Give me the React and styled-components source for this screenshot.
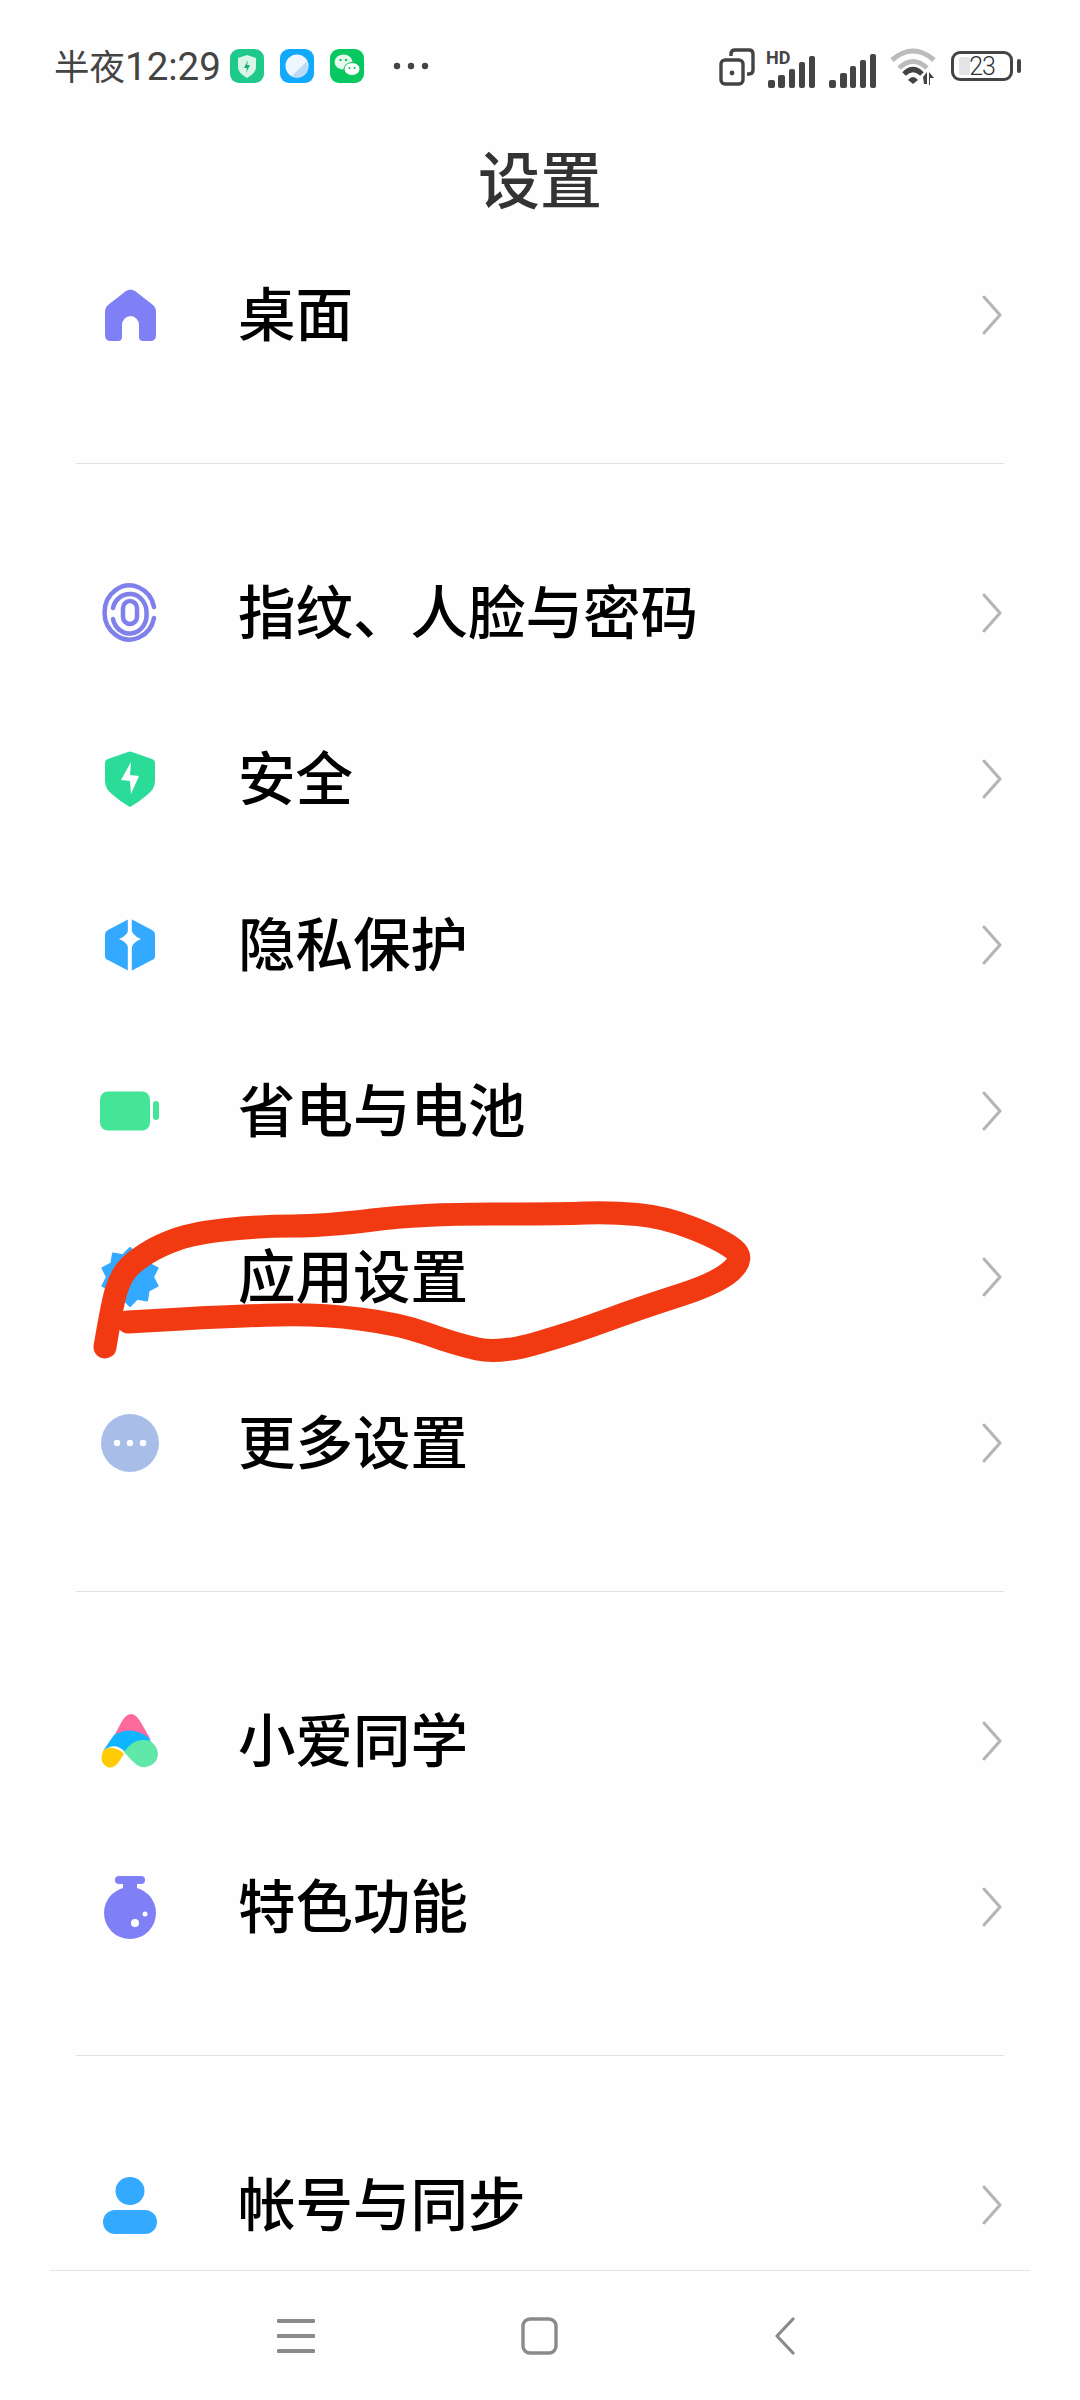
import React from 'react'
import styled, { createGlobalStyle } from 'styled-components'

const GlobalStyle = createGlobalStyle`
  html, body {
    margin: 0;
    padding: 0;
    background: #fefefe;
  }
`

const Page = styled.div`
  position: relative;
  width: 1080px;
  height: 2400px;
  display: flex;
  flex-direction: column;
  overflow: hidden;
  background: #fefefe;
  font-family: "Noto Sans CJK SC", "Noto Sans", sans-serif;
`

const StatusBar = styled.div`
  height: 62px;
  padding: 48px 60px 0 54px;
  display: flex;
  align-items: flex-start;
  justify-content: space-between;
  color: #444;
`

const StatusLeft = styled.div`
  display: flex;
  align-items: center;
  height: 36px;
`

const Clock = styled.span`
  font-size: 35.5px;
  line-height: 36px;
  margin-right: 9px;
  & b {
    font-family: Roboto, sans-serif;
    font-weight: 400;
    font-size: 38.5px;
  }
`

const AppBadge = styled.svg`
  width: 34px;
  height: 34px;
  margin-right: 16px;
`

const MoreDots = styled.svg`
  width: 36px;
  height: 8px;
  margin-left: 13px;
`

const StatusRight = styled.div`
  display: flex;
  align-items: flex-start;
  gap: 13px;
  height: 40px;
`

const SignalWrap = styled.div`
  position: relative;
  width: 48px;
  height: 36px;
  margin-top: 4px;
`

const HdLabel = styled.span`
  position: absolute;
  left: -2px;
  top: -2px;
  font-family: Roboto, sans-serif;
  font-size: 18px;
  line-height: 16px;
  font-weight: 700;
  color: #444;
`

const Battery = styled.div`
  position: relative;
  box-sizing: border-box;
  width: 62px;
  height: 30px;
  margin-top: 3px;
  margin-right: 7px;
  border: 3px solid #444;
  border-radius: 9px;
  display: flex;
  align-items: center;
  justify-content: center;
  font-family: Roboto, sans-serif;
  font-weight: 300;
  font-size: 25px;
  color: #333;
  &::before {
    content: '';
    position: absolute;
    left: 5px;
    top: 3px;
    bottom: 3px;
    width: 11px;
    border-radius: 2px;
    background: #e4e4e4;
  }
  &::after {
    content: '';
    position: absolute;
    right: -11px;
    top: 5px;
    width: 4px;
    height: 14px;
    border-radius: 2px;
    background: #444;
  }
  & span {
    position: relative;
    letter-spacing: -1px;
  }
`

const Title = styled.h1`
  margin: 0;
  height: 122px;
  padding-top: 15px;
  box-sizing: border-box;
  text-align: center;
  font-size: 62px;
  line-height: 104px;
  font-weight: 500;
  color: #333;
`

const Content = styled.div`
  flex: 1;
  min-height: 0;
  overflow: hidden;
`

const Group = styled.div`
  padding: ${(p) => (p.$first ? '0 0 65px' : '66px 0 65px')};
`

const Divider = styled.div`
  height: 1px;
  margin: 0 76px;
  background: #e3e3e3;
`

const Row = styled.div`
  height: 166px;
  padding: 0 78px 0 100px;
  display: flex;
  align-items: center;
`

const IconSlot = styled.div`
  width: 60px;
  height: 60px;
  margin-right: 78px;
  display: flex;
  align-items: center;
  justify-content: center;
  flex: none;
`

const RowLabel = styled.span`
  flex: 1;
  font-size: 57.5px;
  line-height: 70px;
  padding-bottom: 8px;
  font-weight: 500;
  color: #000;
`

const Chevron = styled.svg`
  width: 20px;
  height: 40px;
  flex: none;
`

const NavBar = styled.div`
  height: 130px;
  margin: 0 50px;
  border-top: 1px solid #e3e3e3;
  box-sizing: border-box;
  padding: 46px 235px 0 227px;
  display: flex;
  justify-content: space-between;
  align-items: flex-start;
`

const NavIcon = styled.svg`
  height: 38px;
  width: ${(p) => p.$w}px;
  margin-right: ${(p) => p.$shift || 0}px;
`

const Scribble = styled.svg`
  position: absolute;
  left: 0;
  top: 0;
  width: 1080px;
  height: 2400px;
  pointer-events: none;
`

const HomeIcon = () => (
  <svg width="51" height="52" viewBox="0 0 51 52">
    <path fill="#8080f6" d="M21 2 Q25.5 -1 30 2 L48 16 Q51 18.5 51 23 V46 Q51 52 45 52 H38 Q34 52 34 48 V36 A8.5 9 0 0 0 17 36 V48 Q17 52 13 52 H6 Q0 52 0 46 V23 Q0 18.5 3 16 Z" />
  </svg>
)

const FingerIcon = () => (
  <svg width="56" height="60" viewBox="0 0 56 60" fill="none" stroke="#8080ea" strokeWidth="4.5" strokeLinecap="round">
    <path d="M52 24 A25 27 0 1 0 52 35" />
    <path d="M11 25 A17 18.5 0 0 1 44.5 30 A17 18.5 0 0 1 11 36" />
    <rect x="21" y="18" width="14" height="23" rx="7" />
  </svg>
)

const ShieldIcon = () => (
  <svg width="50" height="56" viewBox="0 0 50 56">
    <path fill="#2bdc98" d="M23 1 Q25 0 27 1 L47 8 Q50 9 50 12 V30 Q50 38 42 44 Q34 51 26 55.5 Q25 56 24 55.5 Q16 51 8 44 Q0 38 0 30 V12 Q0 9 3 8 Z" />
    <path fill="#fff" d="M26 11 L25 24 L34 25 L26 43 L25 30 L16 29 Z" />
  </svg>
)

const PrivacyIcon = () => (
  <svg width="50" height="52" viewBox="0 0 50 52">
    <path fill="#33a9ff" d="M22 1 Q25 -1 28 1 L47 11 Q50 12.5 50 16 V37 Q50 40 47 41 L28 51 Q25 53 22 51 L3 41 Q0 40 0 37 V16 Q0 12.5 3 11 Z" />
    <rect x="22.8" y="0" width="4" height="52" fill="#fefefe" />
    <path fill="#fefefe" d="M25 7 Q27 17 36 20 Q27 23 25 33 Q23 23 14 20 Q23 17 25 7 Z" />
  </svg>
)

const BatteryIcon = () => (
  <svg width="60" height="40" viewBox="0 0 60 40">
    <rect x="0" y="0.5" width="50" height="39" rx="8" fill="#44e596" />
    <rect x="53" y="10" width="6" height="19" rx="3" fill="#44e596" />
  </svg>
)

// scalloped badge behind the scribble
const gearPoints = Array.from({ length: 20 }, (_, i) => {
  const r = i % 2 === 0 ? 29 : 23
  const a = (Math.PI * i) / 10 - Math.PI / 2
  return `${30 + r * Math.cos(a)},${30 + r * Math.sin(a)}`
}).join(' ')

const GearIcon = () => (
  <svg width="60" height="60" viewBox="0 0 60 60">
    <polygon points={gearPoints} fill="#33a9ff" stroke="#33a9ff" strokeWidth="2" strokeLinejoin="round" />
  </svg>
)

const MoreIcon = () => (
  <svg width="58" height="58" viewBox="0 0 58 58">
    <circle cx="29" cy="29" r="29" fill="#a9bde9" />
    <circle cx="16" cy="29" r="3.2" fill="#fff" />
    <circle cx="29" cy="29" r="3.2" fill="#fff" />
    <circle cx="42" cy="29" r="3.2" fill="#fff" />
  </svg>
)

const XiaoaiIcon = () => (
  <svg width="58" height="56" viewBox="0 0 58 56">
    <path fill="#ff6a9e" d="M21 8 Q30 -6 39 8 L50 27 Q30 12 11 27 Z" />
    <path fill="#0fb6ff" d="M13 22 Q30 12 47 24 L52 32 Q37 24 24 39 Q14 28 2 38 Z" />
    <path fill="#5fe8a8" d="M23 39 Q32 26 43 27 Q52 27 56 36 Q59 45 52 51 Q44 57 36 52 Q31 48 23 39 Z" />
    <path fill="#ffcb05" d="M2 38 Q8 32 15 36 Q20 37 23 41 L17 50 Q12 56 6 54 Q-1 50 1 42 Z" />
  </svg>
)

const FlaskIcon = () => (
  <svg width="52" height="63" viewBox="0 0 52 63">
    <rect x="11" y="0" width="30" height="8" rx="4" fill="#8080f6" />
    <rect x="19" y="6" width="14" height="10" fill="#8080f6" />
    <circle cx="26" cy="37" r="26" fill="#8080f6" />
    <circle cx="31" cy="47" r="4" fill="#fff" />
    <circle cx="41" cy="38" r="2.5" fill="#fff" />
  </svg>
)

const UserIcon = () => (
  <svg width="54" height="57" viewBox="0 0 54 57">
    <ellipse cx="27" cy="14" rx="14.5" ry="14" fill="#33a9ff" />
    <rect x="0" y="33" width="54" height="24" rx="12" fill="#33a9ff" />
  </svg>
)

const rows = {
  first: [{ label: '桌面', Icon: HomeIcon }],
  security: [
    { label: '指纹、人脸与密码', Icon: FingerIcon },
    { label: '安全', Icon: ShieldIcon },
    { label: '隐私保护', Icon: PrivacyIcon },
    { label: '省电与电池', Icon: BatteryIcon },
    { label: '应用设置', Icon: GearIcon },
    { label: '更多设置', Icon: MoreIcon },
  ],
  extras: [
    { label: '小爱同学', Icon: XiaoaiIcon },
    { label: '特色功能', Icon: FlaskIcon },
  ],
  account: [{ label: '帐号与同步', Icon: UserIcon }],
}

const scribblePoints = [
  [105, 1347], [112, 1305], [120, 1278], [133, 1262], [160, 1245], [195, 1233], [260, 1226], [325, 1226],
  [420, 1214], [560, 1214], [610, 1212], [665, 1217], [722, 1240], [745, 1258], [718, 1283],
  [640, 1308], [575, 1332], [500, 1354], [455, 1344], [400, 1324], [320, 1314], [235, 1316], [128, 1322],
]

const smoothPath = (pts) => {
  let d = `M${pts[0][0]} ${pts[0][1]}`
  for (let i = 1; i < pts.length - 1; i++) {
    const mx = (pts[i][0] + pts[i + 1][0]) / 2
    const my = (pts[i][1] + pts[i + 1][1]) / 2
    d += ` Q${pts[i][0]} ${pts[i][1]} ${mx} ${my}`
  }
  const last = pts[pts.length - 1]
  return `${d} L${last[0]} ${last[1]}`
}

const MenuRows = ({ items }) =>
  items.map(({ label, Icon }) => (
    <Row key={label}>
      <IconSlot><Icon /></IconSlot>
      <RowLabel>{label}</RowLabel>
      <Chevron viewBox="0 0 20 40" fill="none" stroke="#b4b4b4" strokeWidth="3" strokeLinecap="round" strokeLinejoin="round">
        <path d="M2 2 L18 20 L2 38" />
      </Chevron>
    </Row>
  ))

export default function App() {
  return (
    <Page>
      <GlobalStyle />
      <StatusBar>
        <StatusLeft>
          <Clock>半夜<b>12:29</b></Clock>
          <AppBadge viewBox="0 0 34 34">
            <rect width="34" height="34" rx="9" fill="#1fc98b" />
            <path fill="#d9f5ea" d="M17 6 L26 9 V18 Q26 24 17 29 Q8 24 8 18 V9 Z" />
            <path fill="#1fa878" d="M18 11 L14 19 H17 L16 24 L20 16 H17 Z" />
          </AppBadge>
          <AppBadge viewBox="0 0 34 34">
            <rect width="34" height="34" rx="9" fill="#12a9fb" />
            <circle cx="17" cy="17" r="11.5" fill="#eef6fe" />
            <path fill="#bcd9f8" d="M27 12 L28 20 Q26 28 17 28.5 L12 27 Z" />
          </AppBadge>
          <AppBadge viewBox="0 0 34 34">
            <rect width="34" height="34" rx="9" fill="#07c860" />
            <ellipse cx="13.5" cy="13" rx="9" ry="7.5" fill="#e8f9ef" />
            <ellipse cx="22" cy="20" rx="8" ry="6.5" fill="#fff" stroke="#07c860" strokeWidth="1" />
            <circle cx="10.5" cy="11" r="1.2" fill="#07c860" />
            <circle cx="16" cy="11" r="1.2" fill="#07c860" />
            <circle cx="19.5" cy="19" r="1.1" fill="#07c860" />
            <circle cx="24.5" cy="19" r="1.1" fill="#07c860" />
          </AppBadge>
          <MoreDots viewBox="0 0 36 8" fill="#444">
            <circle cx="4" cy="4" r="3.2" />
            <circle cx="18" cy="4" r="3.2" />
            <circle cx="32" cy="4" r="3.2" />
          </MoreDots>
        </StatusLeft>
        <StatusRight>
          <svg width="36" height="38" viewBox="0 0 36 38" fill="none" stroke="#444" strokeWidth="3.4" strokeLinejoin="round">
            <path d="M12 8 V6 Q12 2 16 2 H30 Q34 2 34 6 V22 Q34 26 30 26 H28" />
            <rect x="2" y="12" width="22" height="24" rx="4" />
            <circle cx="13" cy="25" r="2.4" fill="#444" stroke="none" />
          </svg>
          <SignalWrap>
            <HdLabel>HD</HdLabel>
            <svg width="48" height="36" viewBox="0 0 48 36" fill="#444">
              <rect x="0" y="28" width="7" height="8" rx="2" />
              <rect x="10" y="23" width="7" height="13" rx="2" />
              <rect x="21" y="17" width="6" height="19" rx="2" />
              <rect x="31" y="10" width="6" height="26" rx="2" />
              <rect x="41" y="4" width="6" height="32" rx="2" />
            </svg>
          </SignalWrap>
          <SignalWrap>
            <svg width="48" height="36" viewBox="0 0 48 36" fill="#444">
              <rect x="0" y="28" width="7" height="8" rx="2" />
              <rect x="11" y="21" width="7" height="15" rx="2" />
              <rect x="21" y="14" width="6" height="22" rx="2" />
              <rect x="31" y="8" width="6" height="28" rx="2" />
              <rect x="41" y="2" width="6" height="34" rx="2" />
            </svg>
          </SignalWrap>
          <svg width="48" height="38" viewBox="0 0 48 38" fill="none">
            <path d="M2 12 Q23 -6 44 12" stroke="#bcbcbc" strokeWidth="5" />
            <path d="M9 20 Q23 7 37 20" stroke="#bcbcbc" strokeWidth="5" />
            <path d="M14 26 Q23 17 32 26" stroke="#444" strokeWidth="5" />
            <path d="M18 32 Q23 26 28 32 L23 36 Z" fill="#444" />
            <path d="M33 29 L37 24 V36 H34 Z M39 24 L44 30 L40 30 V37 H39 Z" fill="#444" />
          </svg>
          <Battery><span>23</span></Battery>
        </StatusRight>
      </StatusBar>
      <Title>设置</Title>
      <Content>
        <Group $first><MenuRows items={rows.first} /></Group>
        <Divider />
        <Group><MenuRows items={rows.security} /></Group>
        <Divider />
        <Group><MenuRows items={rows.extras} /></Group>
        <Divider />
        <Group><MenuRows items={rows.account} /></Group>
      </Content>
      <NavBar>
        <NavIcon $w={38} viewBox="0 0 38 38" fill="#8a8a8a">
          <rect x="0" y="2" width="38" height="4" rx="1" />
          <rect x="0" y="17" width="38" height="4" rx="1" />
          <rect x="0" y="32" width="38" height="4" rx="1" />
        </NavIcon>
        <NavIcon $w={37} $shift={12} viewBox="0 0 37 38" fill="none" stroke="#8a8a8a" strokeWidth="3.4">
          <rect x="2" y="2" width="33" height="34" rx="7" />
        </NavIcon>
        <NavIcon $w={20} viewBox="0 0 20 38" fill="none" stroke="#8a8a8a" strokeWidth="3.2" strokeLinecap="round" strokeLinejoin="round">
          <path d="M18 2 L2 19 L18 36" />
        </NavIcon>
      </NavBar>
      <Scribble viewBox="0 0 1080 2400" fill="none">
        <path d={smoothPath(scribblePoints)} stroke="#f23a12" strokeWidth="23" strokeLinecap="round" strokeLinejoin="round" />
      </Scribble>
    </Page>
  )
}
